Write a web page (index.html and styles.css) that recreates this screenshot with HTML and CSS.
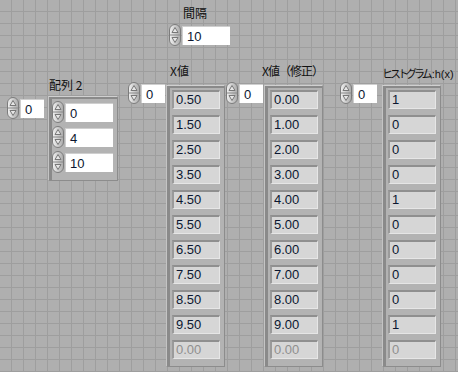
FILE: index.html
```html
<!DOCTYPE html>
<html lang="ja">
<head>
  <meta charset="UTF-8" />
  <title>ヒストグラム</title>
  <link rel="stylesheet" href="styles.css">
</head>
<body>
  <div class="panel">

    <!-- 間隔 -->
    <div class="ctl interval">
      <div class="cap">間隔</div>
      <div class="num">
        <svg class="spin" width="12" height="22" viewBox="0 0 12 22"><defs><linearGradient id="sg" x1="0" x2="1"><stop offset="0" stop-color="#f2f2f2"/><stop offset="1" stop-color="#a9a9a9"/></linearGradient></defs><rect x="0.5" y="0.5" width="11" height="21" rx="5.5" fill="url(#sg)" stroke="#7c7c7c"/><line x1="1" y1="11" x2="11" y2="11" stroke="#8a8a8a"/><path d="M6 3.5 L9 8.5 L3 8.5 Z" fill="#e6e6e6" stroke="#777"/><path d="M6 18.5 L9 13.5 L3 13.5 Z" fill="#e6e6e6" stroke="#777"/></svg>
        <div class="box ctrl wide">10</div>
      </div>
    </div>

    <!-- 配列 2 -->
    <div class="arr a2">
      <div class="idx">
        <svg class="spin" width="12" height="22" viewBox="0 0 12 22"><rect x="0.5" y="0.5" width="11" height="21" rx="5.5" fill="url(#sg)" stroke="#7c7c7c"/><line x1="1" y1="11" x2="11" y2="11" stroke="#8a8a8a"/><path d="M6 3.5 L9 8.5 L3 8.5 Z" fill="#e6e6e6" stroke="#777"/><path d="M6 18.5 L9 13.5 L3 13.5 Z" fill="#e6e6e6" stroke="#777"/></svg>
        <div class="box ctrl">0</div>
      </div>
      <div class="col">
        <div class="cap">配列 2</div>
        <div class="frame">
          <div class="num">
            <svg class="spin" width="12" height="22" viewBox="0 0 12 22"><rect x="0.5" y="0.5" width="11" height="21" rx="5.5" fill="url(#sg)" stroke="#7c7c7c"/><line x1="1" y1="11" x2="11" y2="11" stroke="#8a8a8a"/><path d="M6 3.5 L9 8.5 L3 8.5 Z" fill="#e6e6e6" stroke="#777"/><path d="M6 18.5 L9 13.5 L3 13.5 Z" fill="#e6e6e6" stroke="#777"/></svg>
            <div class="box ctrl wide">0</div>
          </div>
          <div class="num">
            <svg class="spin" width="12" height="22" viewBox="0 0 12 22"><rect x="0.5" y="0.5" width="11" height="21" rx="5.5" fill="url(#sg)" stroke="#7c7c7c"/><line x1="1" y1="11" x2="11" y2="11" stroke="#8a8a8a"/><path d="M6 3.5 L9 8.5 L3 8.5 Z" fill="#e6e6e6" stroke="#777"/><path d="M6 18.5 L9 13.5 L3 13.5 Z" fill="#e6e6e6" stroke="#777"/></svg>
            <div class="box ctrl wide">4</div>
          </div>
          <div class="num">
            <svg class="spin" width="12" height="22" viewBox="0 0 12 22"><rect x="0.5" y="0.5" width="11" height="21" rx="5.5" fill="url(#sg)" stroke="#7c7c7c"/><line x1="1" y1="11" x2="11" y2="11" stroke="#8a8a8a"/><path d="M6 3.5 L9 8.5 L3 8.5 Z" fill="#e6e6e6" stroke="#777"/><path d="M6 18.5 L9 13.5 L3 13.5 Z" fill="#e6e6e6" stroke="#777"/></svg>
            <div class="box ctrl wide">10</div>
          </div>
        </div>
      </div>
    </div>

    <!-- X値 -->
    <div class="arr ax">
      <div class="idx">
        <svg class="spin" width="12" height="22" viewBox="0 0 12 22"><rect x="0.5" y="0.5" width="11" height="21" rx="5.5" fill="url(#sg)" stroke="#7c7c7c"/><line x1="1" y1="11" x2="11" y2="11" stroke="#8a8a8a"/><path d="M6 3.5 L9 8.5 L3 8.5 Z" fill="#e6e6e6" stroke="#777"/><path d="M6 18.5 L9 13.5 L3 13.5 Z" fill="#e6e6e6" stroke="#777"/></svg>
        <div class="box ctrl">0</div>
      </div>
      <div class="col">
        <div class="cap">X値</div>
        <div class="frame">
          <div class="box ind">0.50</div>
          <div class="box ind">1.50</div>
          <div class="box ind">2.50</div>
          <div class="box ind">3.50</div>
          <div class="box ind">4.50</div>
          <div class="box ind">5.50</div>
          <div class="box ind">6.50</div>
          <div class="box ind">7.50</div>
          <div class="box ind">8.50</div>
          <div class="box ind">9.50</div>
          <div class="box ind off">0.00</div>
        </div>
      </div>
    </div>

    <!-- X値（修正） -->
    <div class="arr axm">
      <div class="idx">
        <svg class="spin" width="12" height="22" viewBox="0 0 12 22"><rect x="0.5" y="0.5" width="11" height="21" rx="5.5" fill="url(#sg)" stroke="#7c7c7c"/><line x1="1" y1="11" x2="11" y2="11" stroke="#8a8a8a"/><path d="M6 3.5 L9 8.5 L3 8.5 Z" fill="#e6e6e6" stroke="#777"/><path d="M6 18.5 L9 13.5 L3 13.5 Z" fill="#e6e6e6" stroke="#777"/></svg>
        <div class="box ctrl">0</div>
      </div>
      <div class="col">
        <div class="cap tight">X値（修正）</div>
        <div class="frame">
          <div class="box ind">0.00</div>
          <div class="box ind">1.00</div>
          <div class="box ind">2.00</div>
          <div class="box ind">3.00</div>
          <div class="box ind">4.00</div>
          <div class="box ind">5.00</div>
          <div class="box ind">6.00</div>
          <div class="box ind">7.00</div>
          <div class="box ind">8.00</div>
          <div class="box ind">9.00</div>
          <div class="box ind off">0.00</div>
        </div>
      </div>
    </div>

    <!-- ヒストグラム -->
    <div class="arr ah">
      <div class="idx">
        <svg class="spin" width="12" height="22" viewBox="0 0 12 22"><rect x="0.5" y="0.5" width="11" height="21" rx="5.5" fill="url(#sg)" stroke="#7c7c7c"/><line x1="1" y1="11" x2="11" y2="11" stroke="#8a8a8a"/><path d="M6 3.5 L9 8.5 L3 8.5 Z" fill="#e6e6e6" stroke="#777"/><path d="M6 18.5 L9 13.5 L3 13.5 Z" fill="#e6e6e6" stroke="#777"/></svg>
        <div class="box ctrl">0</div>
      </div>
      <div class="col">
        <div class="cap nowrap"><span class="kana">ヒストグラム</span>:h(x)</div>
        <div class="frame">
          <div class="box ind">1</div>
          <div class="box ind">0</div>
          <div class="box ind">0</div>
          <div class="box ind">0</div>
          <div class="box ind">1</div>
          <div class="box ind">0</div>
          <div class="box ind">0</div>
          <div class="box ind">0</div>
          <div class="box ind">0</div>
          <div class="box ind">1</div>
          <div class="box ind off">0</div>
        </div>
      </div>
    </div>

  </div>
</body>
</html>
```

FILE: styles.css
```css
body {
  margin: 0;
  padding: 0;
  font-family: "Liberation Sans", "Noto Sans CJK JP", sans-serif;
  font-size: 12px;
  color: #0b1630;
}
.panel {
  position: relative;
  width: 458px;
  height: 372px;
  overflow: hidden;
  background-color: #afafaf;
  background-image:
    linear-gradient(to right, transparent 11px, #9e9e9e 11px),
    linear-gradient(to bottom, transparent 11px, #9e9e9e 11px);
  background-size: 12px 12px;
}
.ctl,
.arr {
  position: absolute;
}
.interval {
  left: 169px;
  top: 5px;
}
.interval .cap {
  margin-left: 14px;
  margin-bottom: 3px;
}
.cap {
  font-family: "Noto Sans CJK JP", sans-serif;
  font-size: 12px;
  line-height: 16px;
  height: 16px;
  color: #111;
}
.cap.tight {
  letter-spacing: -1px;
  white-space: nowrap;
}
.nowrap {
  white-space: nowrap;
  font-family: "Liberation Sans", "Noto Sans CJK JP", sans-serif;
  font-size: 11px;
}
.kana {
  font-family: "Noto Sans CJK JP", sans-serif;
  letter-spacing: -3px;
  margin-right: 2px;
}
.num {
  display: flex;
  align-items: center;
  gap: 1px;
}
.spin {
  display: block;
  flex: none;
}
.box {
  box-sizing: border-box;
  height: 19px;
  line-height: 19px;
  padding-left: 4px;
  font-size: 13px;
}
.ctrl {
  width: 24px;
  background: #fff;
  border-top: 1px solid #cfcfcf;
  border-left: 1px solid #cfcfcf;
}
.ctrl.wide {
  width: 48px;
}
.arr {
  display: flex;
  align-items: flex-start;
}
.idx {
  display: flex;
  align-items: center;
  gap: 1px;
  flex: none;
}
.col {
  display: flex;
  flex-direction: column;
  align-items: flex-start;
}
.frame {
  display: flex;
  flex-direction: column;
  gap: 6px;
  background: #b3b3b3;
  border-top: 1px solid #d0d0d0;
  border-left: 1px solid #c4c4c4;
  border-right: 1px solid #8c8c8c;
  border-bottom: 1px solid #8c8c8c;
  box-shadow: inset 4px 3px 0 -1px #8a8a8a;
  padding: 4px 4px 7px 5px;
}
.ind {
  width: 48px;
  background: #d6d6d6;
  border-top: 2px solid #8f8f8f;
  border-left: 2px solid #9a9a9a;
  border-right: 1px solid #e6e6e6;
  border-bottom: 1px solid #e6e6e6;
  padding-left: 2px;
  line-height: 16px;
}
.ind.off {
  color: #8f8f8f;
}
.a2 {
  left: 7px;
  top: 77px;
}
.a2 .idx {
  margin-top: 20px;
  margin-right: 4px;
}
.a2 .cap {
  margin-left: 1px;
}
.a2 .frame {
  margin-top: 3px;
  gap: 3px;
  padding: 4px 4px 7px 3px;
}
.ax {
  left: 128px;
  top: 63px;
}
.ax .idx {
  margin-top: 19px;
  margin-right: 1px;
}
.ax .cap,
.axm .cap {
  margin-left: 4px;
  margin-bottom: 6px;
}
.axm {
  left: 226px;
  top: 63px;
}
.axm .idx {
  margin-top: 19px;
  margin-right: 1px;
}
.axm .cap {
  margin-left: -2px;
}
.ah {
  left: 340px;
  top: 65px;
}
.ah .idx {
  margin-top: 17px;
  margin-right: 5px;
}
.ah .cap {
  margin-bottom: 4px;
}
```
